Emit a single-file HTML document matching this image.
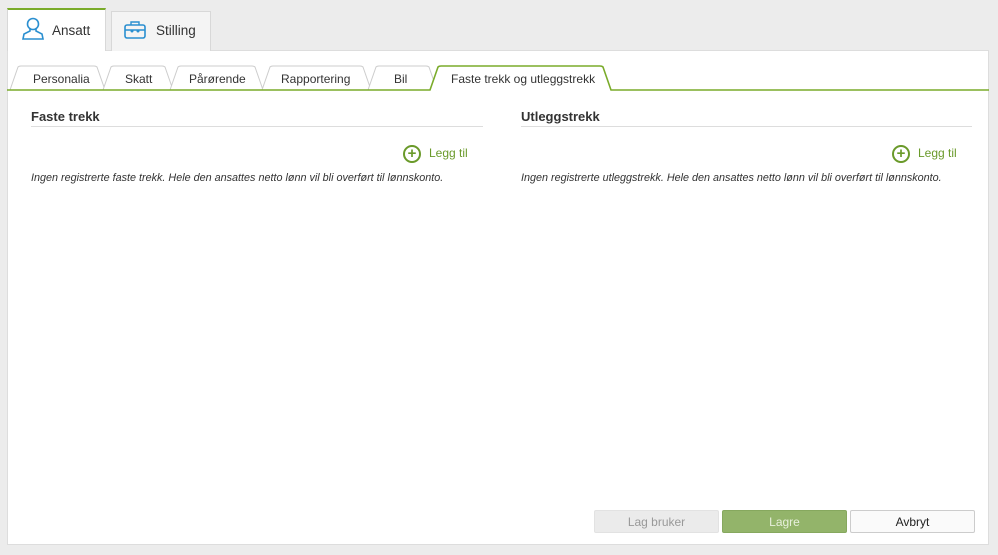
<!DOCTYPE html>
<html><head><style>
body{margin:0;width:998px;height:555px;background:#ececec;font-family:"Liberation Sans",sans-serif;position:relative;overflow:hidden}
.abs{position:absolute}
.panel{left:7px;top:50px;width:982px;height:495px;background:#fff;border:1px solid #ddd;box-sizing:border-box}
.tab{top:11px;height:40px;background:#f4f4f4;border:1px solid #d8d8d8;border-bottom:none;box-sizing:border-box;font-size:13.5px;color:#333;line-height:38px}
.h{font-size:13px;font-weight:bold;color:#333;top:109px}
.line{height:1px;background:#ddd;top:126px}
.it{font-size:10.8px;font-style:italic;color:#333;top:172px}
.add{top:144px;font-size:12px;color:#6a9a2a;line-height:18px}
.add span.c{display:inline-block;width:14px;height:14px;border:2px solid #6a9a2a;border-radius:50%;text-align:center;line-height:14px;font-size:15px;vertical-align:middle;margin-right:8px;font-weight:bold}
.btn{top:510px;height:23px;font-size:12px;text-align:center;line-height:23px;box-sizing:border-box;border-radius:2px}
</style></head><body>
<div class="abs panel"></div>
<div class="abs tab" style="left:7px;top:8px;width:99px;height:43px;background:#fff;border-top:2px solid #7aab2a;padding-left:44px;line-height:42px">Ansatt</div>
<svg class="abs" style="left:22px;top:17px" width="22" height="24" viewBox="0 0 22 24"><circle cx="11" cy="7" r="5.5" fill="none" stroke="#2a8fd0" stroke-width="1.6"/><path d="M8 12 L8 14 L2 17 L1 22 L21 22 L20 17 L14 14 L14 12" fill="none" stroke="#2a8fd0" stroke-width="1.6"/></svg>
<div class="abs tab" style="left:111px;width:100px;padding-left:44px">Stilling</div>
<svg class="abs" style="left:124px;top:20px" width="22" height="20" viewBox="0 0 22 20"><rect x="1" y="5" width="20" height="13" rx="2" fill="none" stroke="#2a8fd0" stroke-width="1.6"/><path d="M7 5V2h8v3M1 10h20" fill="none" stroke="#2a8fd0" stroke-width="1.4"/><circle cx="8" cy="11" r="1.5" fill="#2a8fd0"/><circle cx="14" cy="11" r="1.5" fill="#2a8fd0"/></svg>
<svg class="abs" style="left:0;top:60px" width="998" height="34" font-family="Liberation Sans" font-size="12" fill="#333">
<g fill="#fff" stroke="#ccc" stroke-width="1">
<path d="M10 30 L18 7 Q19 6 21 6 L94 6 Q96 6 97 7 L105 30"/>
<path d="M103 30 L111 7 Q112 6 114 6 L162 6 Q164 6 165 7 L173 30"/>
<path d="M170 30 L178 7 Q179 6 181 6 L252 6 Q254 6 255 7 L263 30"/>
<path d="M262 30 L270 7 Q271 6 273 6 L360 6 Q362 6 363 7 L371 30"/>
<path d="M368 30 L376 7 Q377 6 379 6 L426 6 Q428 6 429 7 L437 30"/>
</g>
<path d="M7 30 L430 30 L438 7 Q439 6 441 6 L600 6 Q602 6 603 7 L611 30 L989 30" fill="#fff" stroke="#7aab2a" stroke-width="1.6"/>
<text x="33" y="23">Personalia</text><text x="125" y="23">Skatt</text><text x="189" y="23">Pårørende</text><text x="281" y="23">Rapportering</text><text x="394" y="23">Bil</text><text x="451" y="23">Faste trekk og utleggstrekk</text>
</svg>
<div class="abs h" style="left:31px">Faste trekk</div>
<div class="abs line" style="left:31px;width:452px"></div>
<div class="abs add" style="left:403px"><span class="c">+</span>Legg til</div>
<div class="abs it" style="left:31px">Ingen registrerte faste trekk. Hele den ansattes netto lønn vil bli overført til lønnskonto.</div>
<div class="abs h" style="left:521px">Utleggstrekk</div>
<div class="abs line" style="left:521px;width:451px"></div>
<div class="abs add" style="left:892px"><span class="c">+</span>Legg til</div>
<div class="abs it" style="left:521px">Ingen registrerte utleggstrekk. Hele den ansattes netto lønn vil bli overført til lønnskonto.</div>
<div class="abs btn" style="left:594px;width:125px;background:#ebebeb;color:#999;border:1px solid #e2e2e2">Lag bruker</div>
<div class="abs btn" style="left:722px;width:125px;background:#93b46a;color:#e8f0dc;border:1px solid #86a85e">Lagre</div>
<div class="abs btn" style="left:850px;width:125px;background:#fafafa;color:#222;border:1px solid #ccc">Avbryt</div>
</body></html>
